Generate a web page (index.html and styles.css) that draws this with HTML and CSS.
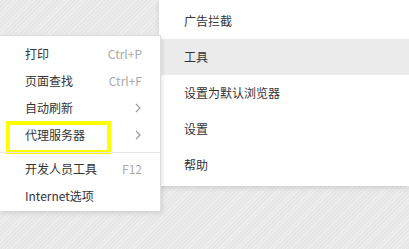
FILE: index.html
```html
<!DOCTYPE html>
<html lang="zh-CN">

<head>
    <meta charset="UTF-8">
    <meta name="viewport" content="width=device-width, initial-scale=1.0">
    <title>菜单</title>
    <link rel="stylesheet" href="styles.css">
</head>

<body>

    <!-- 主菜单 -->
    <ul class="menu-main">
        <li>广告拦截</li>
        <li class="active">工具</li>
        <li>设置为默认浏览器</li>
        <li>设置</li>
        <li>帮助</li>
    </ul>

    <!-- 工具子菜单 -->
    <ul class="menu-sub">
        <li><span>打印</span><em>Ctrl+P</em></li>
        <li><span>页面查找</span><em>Ctrl+F</em></li>
        <li><span>自动刷新</span><i class="arrow"><svg width="6" height="10" viewBox="0 0 6 10"><path d="M1 1l4 4-4 4" fill="none" stroke="#999" stroke-width="1.1"/></svg></i></li>
        <li class="mark"><span>代理服务器</span><i class="arrow"><svg width="6" height="10" viewBox="0 0 6 10"><path d="M1 1l4 4-4 4" fill="none" stroke="#999" stroke-width="1.1"/></svg></i></li>
        <li class="line"></li>
        <li><span>开发人员工具</span><em>F12</em></li>
        <li><span>Internet选项</span></li>
    </ul>

</body>

</html>
```

FILE: styles.css
```css
html, body {
    margin: 0;
    height: 100%;
}
body {
    position: relative;
    overflow: hidden;
    font-family: "Noto Sans CJK SC", "Liberation Sans", sans-serif;
    font-size: 12px;
    color: #333;
    background-color: #e7e7e7;
    background-image: repeating-linear-gradient(135deg, rgba(255,255,255,.35) 0 1px, transparent 1px 3px);
}
ul {
    list-style: none;
    margin: 0;
}
.menu-main {
    position: absolute;
    top: 0;
    left: 159px;
    width: 250px;
    padding: 3px 0;
    background: #fff;
    box-shadow: 0 2px 5px rgba(0,0,0,.12);
}
.menu-main li {
    height: 36px;
    line-height: 36px;
    padding-left: 25px;
}
.menu-main li.active {
    background: #ebebeb;
}
.menu-sub {
    position: absolute;
    top: 35px;
    left: 0;
    width: 160px;
    padding: 4px 0 2px;
    background: #fff;
    border-top: 1px solid #dedede;
    border-right: 1px solid #dedede;
    box-shadow: 1px 2px 5px rgba(0,0,0,.12);
}
.menu-sub li {
    position: relative;
    display: flex;
    align-items: center;
    justify-content: space-between;
    height: 27px;
    padding: 0 18px 0 25px;
}
.menu-sub em {
    font-style: normal;
    color: #aaa;
}
.menu-sub .arrow {
    display: flex;
    margin-right: 1px;
}
.menu-sub li.line {
    height: 7px;
    padding: 0;
}
.menu-sub li.line::after {
    content: "";
    flex: 1;
    height: 1px;
    margin-top: 1px;
    background: #e6e6e6;
}
.menu-sub li.mark::before {
    content: "";
    position: absolute;
    top: 0;
    left: 6px;
    width: 97px;
    height: 25px;
    border: 4px solid #ffff00;
}
```
